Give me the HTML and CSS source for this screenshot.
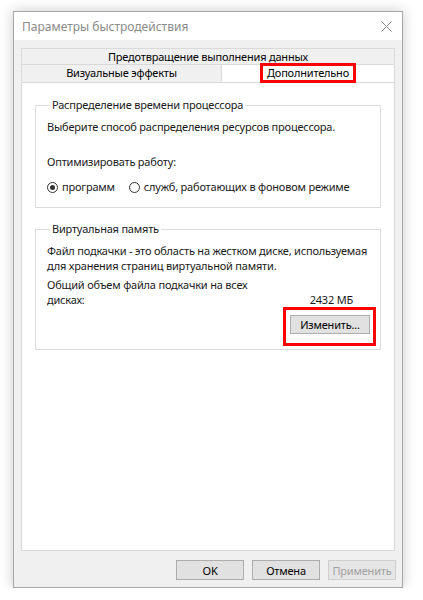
FILE: index.html
```html
<!DOCTYPE html>
<html lang="ru">
<head>
  <meta charset="UTF-8" />
  <title>Параметры быстродействия</title>
  <link rel="stylesheet" href="styles.css">
</head>
<body>
  <div class="dialog">
    <div class="titlebar">
      <span class="title">Параметры быстродействия</span>
      <svg class="close" width="11" height="11" viewBox="0 0 11 11">
        <path d="M0.5 0.5 L10.5 10.5 M10.5 0.5 L0.5 10.5" stroke="#8c8c8c" stroke-width="1" fill="none"/>
      </svg>
    </div>
    <div class="dialog-body">
      <div class="tabs">
        <div class="tab-row back">
          <div class="tab">Предотвращение выполнения данных</div>
        </div>
        <div class="tab-row front">
          <div class="tab">Визуальные эффекты</div>
          <div class="tab active"><span class="mark">Дополнительно</span></div>
        </div>
      </div>
      <div class="panel">
        <fieldset class="group cpu">
          <legend>Распределение времени процессора</legend>
          <p class="line">Выберите способ распределения ресурсов процессора.</p>
          <p class="line opt">Оптимизировать работу:</p>
          <div class="radios">
            <label class="radio"><span class="dot checked"></span>программ</label>
            <label class="radio"><span class="dot"></span>служб, работающих в фоновом режиме</label>
          </div>
        </fieldset>
        <fieldset class="group vmem">
          <legend>Виртуальная память</legend>
          <p class="line">Файл подкачки - это область на жестком диске, используемая<br>для хранения страниц виртуальной памяти.</p>
          <div class="total">
            <p class="line total-label">Общий объем файла подкачки на всех<br>дисках:</p>
            <span class="total-value">2432 МБ</span>
          </div>
          <div class="change-row">
            <span class="mark-box"><button class="btn">Изменить...</button></span>
          </div>
        </fieldset>
      </div>
      <div class="buttons">
        <button class="btn">OK</button>
        <button class="btn">Отмена</button>
        <button class="btn" disabled>Применить</button>
      </div>
    </div>
  </div>
</body>
</html>
```

FILE: styles.css
```css
body {
  margin: 0;
  background: #fff;
  font-family: "Noto Sans", "Segoe UI", Arial, sans-serif;
  font-size: 11px;
  letter-spacing: -0.2px;
  color: #1a1a1a;
}
.dialog {
  margin: 11px 0 0 13px;
  width: 388px;
  height: 575px;
  border: 1px solid #a6a6a6;
  box-shadow: 0 0 12px rgba(0,0,0,0.22);
  display: flex;
  flex-direction: column;
  background: #f0f0f0;
}
.titlebar {
  height: 28px;
  background: #fff;
  display: flex;
  align-items: center;
  justify-content: space-between;
  padding: 0 10px 0 8px;
}
.title {
  font-size: 12px;
  color: #8a8a8a;
  letter-spacing: 0;
}
.close {
  margin-top: 1px;
}
.dialog-body {
  flex: 1;
  display: flex;
  flex-direction: column;
  padding: 8px 6px 7px 7px;
}
.tab-row {
  display: flex;
  margin-right: 1px;
}
.tab {
  height: 16px;
  line-height: 16px;
  text-align: center;
  border: 1px solid #d9d9d9;
  border-bottom: none;
  background: #f0f0f0;
  color: #000;
  white-space: nowrap;
}
.back .tab {
  flex: 1;
}
.front .tab {
  width: 199px;
  height: 16px;
  margin-top: -1px;
}
.front .tab.active {
  flex: 1;
  background: #fff;
  border-left: none;
  height: 17px;
  position: relative;
  z-index: 1;
}
.mark {
  display: inline-block;
  border: 3px solid #ff0000;
  padding: 0 4px;
  height: 14px;
  line-height: 14px;
  margin-top: -2px;
}
.panel {
  flex: 1;
  background: #fff;
  border: 1px solid #d9d9d9;
  margin-right: 1px;
  padding: 14px 13px 0 13px;
}
.group {
  border: 1px solid #dcdcdc;
  margin: 0;
  padding: 6px 11px 12px 11px;
}
.group legend {
  padding: 0 2px;
  margin-left: 3px;
  line-height: 16px;
  color: #1a1a1a;
}
.line {
  margin: 0;
  line-height: 15px;
  white-space: nowrap;
}
.opt {
  margin-top: 20px;
}
.radios {
  margin-top: 10px;
  display: flex;
  gap: 14px;
  line-height: 16px;
}
.radio {
  display: flex;
  align-items: center;
  gap: 4px;
}
.dot {
  width: 11px;
  height: 11px;
  box-sizing: border-box;
  border: 1px solid #333;
  border-radius: 50%;
  background: #fff;
  position: relative;
}
.dot.checked::after {
  content: "";
  position: absolute;
  left: 2px;
  top: 2px;
  width: 5px;
  height: 5px;
  border-radius: 50%;
  background: #333;
}
.vmem {
  margin-top: 13px;
  padding: 6px 4px 3px 11px;
}
.total {
  margin-top: 4px;
  display: flex;
  align-items: flex-end;
  justify-content: space-between;
  padding-right: 23px;
  line-height: 15px;
}
.change-row {
  display: flex;
  justify-content: flex-end;
  margin-top: 0;
}
.mark-box {
  border: 3px solid #ff0000;
  padding: 5px 3px 9px 4px;
}
.btn {
  font-family: inherit;
  font-size: 11px;
  letter-spacing: -0.2px;
  color: #000;
  background: #e1e1e1;
  border: 1px solid #adadad;
  padding: 0;
  height: 21px;
  border-radius: 0;
}
.mark-box .btn {
  width: 80px;
  height: 19px;
  display: block;
}
.buttons {
  display: flex;
  justify-content: flex-end;
  gap: 8px;
  margin-top: 9px;
}
.buttons .btn {
  width: 68px;
  height: 20px;
}
.btn:disabled {
  color: #a0a0a0;
  background: #e6e6e6;
  border-color: #cfcfcf;
}
```
